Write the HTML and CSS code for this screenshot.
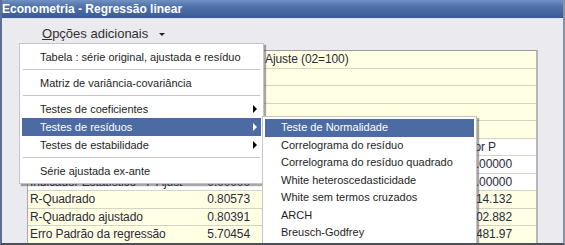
FILE: index.html
```html
<!DOCTYPE html>
<html lang="pt">
<head>
    <meta charset="UTF-8">
    <title>Econometria - Regressão linear</title>
    <link rel="stylesheet" href="styles.css">
</head>
<body>
    <div class="window">
        <div class="titlebar">Econometria - Regressão linear</div>
        <div class="client">
            <div class="toolbar">
                <button class="menu-btn"><u>O</u>pções adicionais <span class="caret"></span></button>
            </div>
            <div class="results">
                <div class="row">
                    <div class="cell c1"></div><div class="cell c2"></div>
                    <div class="cell c3 wide">Ajuste (02=100)</div>
                </div>
                <div class="row"><div class="cell c1"></div><div class="cell c2"></div><div class="cell c3"></div><div class="cell c4"></div><div class="cell c5"></div><div class="cell c6"></div></div>
                <div class="row"><div class="cell c1"></div><div class="cell c2"></div><div class="cell c3"></div><div class="cell c4"></div><div class="cell c5"></div><div class="cell c6"></div></div>
                <div class="row"><div class="cell c1"></div><div class="cell c2"></div><div class="cell c3"></div><div class="cell c4"></div><div class="cell c5"></div><div class="cell c6"></div></div>
                <div class="row"><div class="cell c1"></div><div class="cell c2"></div><div class="cell c3"></div><div class="cell c4"></div><div class="cell c5"></div><div class="cell c6"></div></div>
                <div class="row white">
                    <div class="cell c1">Estatística</div><div class="cell c2 num">Valor</div>
                    <div class="cell c3"></div><div class="cell c4"></div><div class="cell c5"></div>
                    <div class="cell c6 head">Valor P</div>
                </div>
                <div class="row white">
                    <div class="cell c1">Indicador Estatístico - F</div><div class="cell c2 num">0.00000</div>
                    <div class="cell c3"></div><div class="cell c4"></div><div class="cell c5"></div>
                    <div class="cell c6 num">0.00000</div>
                </div>
                <div class="row white">
                    <div class="cell c1">Indicador Estatístico - F Ajust</div><div class="cell c2 num">0.00000</div>
                    <div class="cell c3"></div><div class="cell c4"></div><div class="cell c5"></div>
                    <div class="cell c6 num">0.00000</div>
                </div>
                <div class="row">
                    <div class="cell c1">R-Quadrado</div><div class="cell c2 num">0.80573</div>
                    <div class="cell c3"></div><div class="cell c4"></div><div class="cell c5"></div>
                    <div class="cell c6 num">1914.132</div>
                </div>
                <div class="row">
                    <div class="cell c1">R-Quadrado ajustado</div><div class="cell c2 num">0.80391</div>
                    <div class="cell c3"></div><div class="cell c4"></div><div class="cell c5"></div>
                    <div class="cell c6 num">1902.882</div>
                </div>
                <div class="row">
                    <div class="cell c1">Erro Padrão da regressão</div><div class="cell c2 num">5.70454</div>
                    <div class="cell c3"></div><div class="cell c4"></div><div class="cell c5"></div>
                    <div class="cell c6 num">3481.97</div>
                </div>
            </div>
        </div>

        <div class="menu">
            <div class="item">Tabela : série original, ajustada e resíduo</div>
            <div class="sep"></div>
            <div class="item">Matriz de variância-covariância</div>
            <div class="sep"></div>
            <div class="item sub">Testes de coeficientes</div>
            <div class="item sub active">Testes de resíduos</div>
            <div class="item sub">Testes de estabilidade</div>
            <div class="sep"></div>
            <div class="item">Série ajustada ex-ante</div>
        </div>

        <div class="menu submenu">
            <div class="item active">Teste de Normalidade</div>
            <div class="item">Correlograma do resíduo</div>
            <div class="item">Correlograma do resíduo quadrado</div>
            <div class="item">White heteroscedasticidade</div>
            <div class="item">White sem termos cruzados</div>
            <div class="item">ARCH</div>
            <div class="item">Breusch-Godfrey</div>
        </div>
    </div>
</body>
</html>
```

FILE: styles.css
```css
body {
    margin: 0;
    font-family: "Liberation Sans", Arial, sans-serif;
    background-color: #ebeaee;
    overflow: hidden;
}
.window {
    position: relative;
    width: 565px;
    height: 245px;
    box-sizing: border-box;
    border-left: 2px solid #5a6f92;
    border-right: 2px solid #8a93a6;
    border-bottom: 2px solid #4b4f5a;
    background-color: #ebeaee;
    overflow: hidden;
}
.titlebar {
    height: 18px;
    margin-left: -2px;
    margin-right: -2px;
    padding-left: 2px;
    border-bottom: 1px solid #dfe5ef;
    background: linear-gradient(#7291c4, #5073ab 35%, #4465a0 70%, #3b5a93);
    color: white;
    font-weight: bold;
    font-size: 12px;
    line-height: 18px;
}
.toolbar {
    height: 31px;
    padding-left: 36px;
}
.menu-btn {
    margin-top: 6px;
    border: none;
    background: none;
    padding: 0 4px;
    font-family: "Liberation Sans", Arial, sans-serif;
    font-size: 13px;
    color: #303030;
    height: 17px;
}
.caret {
    display: inline-block;
    margin-left: 7px;
    vertical-align: middle;
    border-top: 3px solid #222;
    border-left: 3px solid transparent;
    border-right: 3px solid transparent;
}
.results {
    margin-left: 25px;
    width: 511px;
    border-top: 1px solid #9c9c9c;
    border-left: 1px solid #a8a8a8;
    border-right: 2px solid #b8b8b8;
    box-sizing: border-box;
    font-size: 12px;
    letter-spacing: -0.1px;
    color: #2c2a3a;
}
.row {
    display: flex;
    height: 17.5px;
    box-sizing: border-box;
    border-bottom: 1px solid #d4d4c4;
    background-color: #ffffe4;
}
.row.white {
    background-color: #ffffff;
}
.cell {
    box-sizing: border-box;
    padding: 0 2px;
    line-height: 16px;
    white-space: nowrap;
    overflow: hidden;
}
.c1 { width: 168px; }
.c2 { width: 62px; }
.c3 { width: 70px; }
.c4 { width: 72px; }
.c5 { width: 70px; }
.c6 { width: 66px; }
.wide {
    flex: 1;
    padding-left: 7px;
}
.num {
    text-align: right;
    padding-right: 8px;
}
.c6.num {
    padding-right: 24px;
    overflow: visible;
    direction: rtl;
}
.head {
    text-align: right;
    padding-right: 40px;
    overflow: visible;
    direction: rtl;
}
.menu {
    position: absolute;
    left: 17px;
    top: 43px;
    width: 245px;
    box-sizing: border-box;
    padding: 4px 2px 3px 2px;
    background-color: #ffffff;
    border: 1px solid #c4c4c8;
    box-shadow: 2px 2px 1px rgba(60, 60, 70, 0.45);
    font-size: 11px;
    color: #1e1e1e;
}
.item {
    position: relative;
    height: 18px;
    line-height: 18px;
    padding-left: 18px;
    white-space: nowrap;
}
.item.active {
    background-color: #4b6ba2;
    color: #ffffff;
}
.item.sub::after {
    content: "";
    position: absolute;
    right: 4px;
    top: 5px;
    border-left: 4px solid #000;
    border-top: 4px solid transparent;
    border-bottom: 4px solid transparent;
}
.item.sub.active::after {
    border-left-color: #ffffff;
}
.sep {
    height: 8px;
    margin: 0 1px;
    background: linear-gradient(transparent 3px, #c6c6c6 3px, #c6c6c6 4px, transparent 4px);
}
.submenu {
    left: 260px;
    top: 116px;
    width: 215px;
    padding: 2px 2px 2px 2px;
}
.submenu .item {
    height: 17.5px;
    line-height: 17px;
    padding-left: 16px;
}
```
